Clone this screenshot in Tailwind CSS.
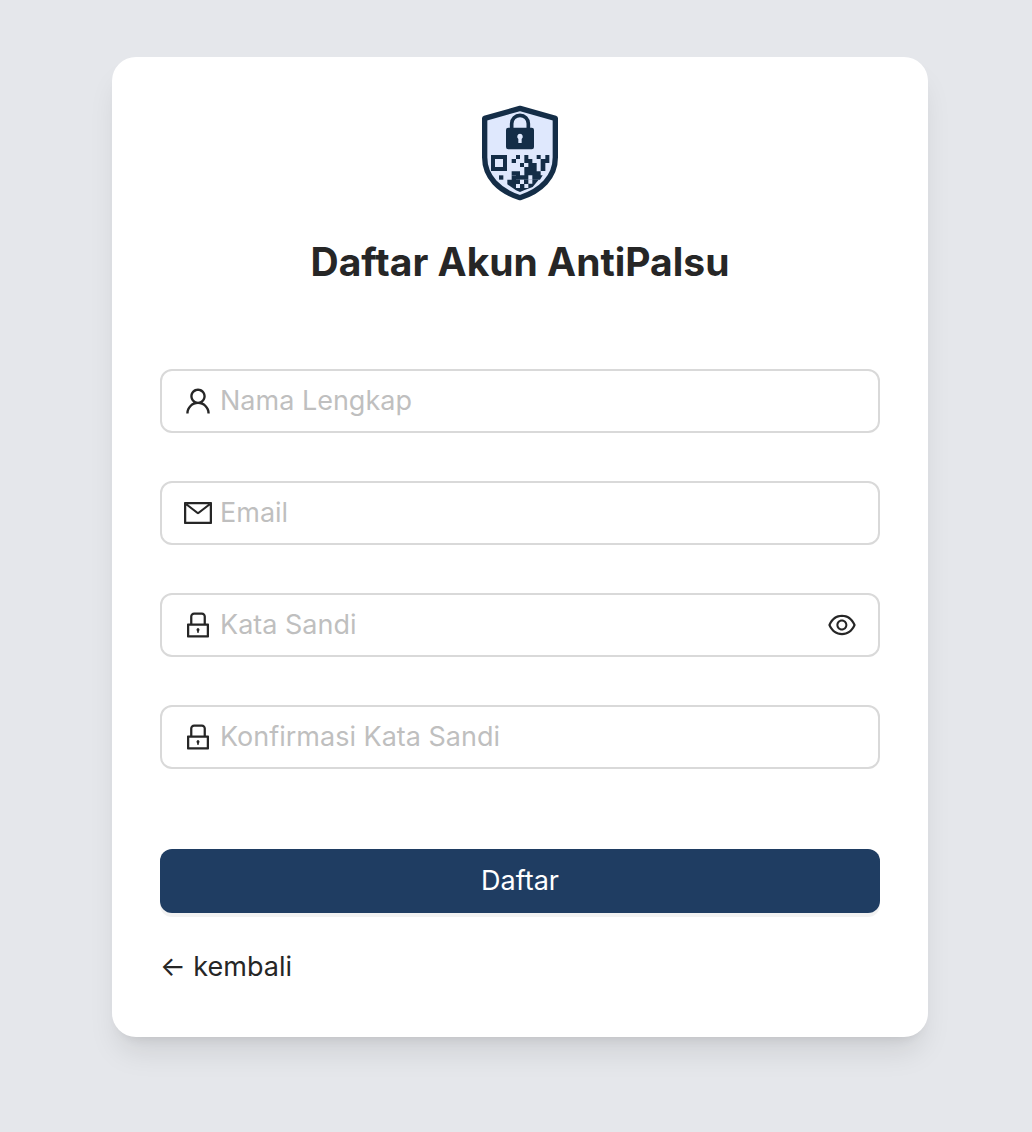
<!DOCTYPE html>
<html lang="id">
<head>
    <meta charset="UTF-8">
    <meta name="viewport" content="width=device-width, initial-scale=1.0">
    <title>Daftar Akun AntiPalsu</title>
    <script src="https://cdn.jsdelivr.net/npm/@tailwindcss/browser@4"></script>
</head>
<body class="min-h-screen bg-[#e5e7eb] pt-[57px] pb-24 pl-28 pr-26 font-['Inter',sans-serif] text-[#262626]">
    <main class="w-full max-w-[816px] mx-auto bg-white rounded-3xl p-12 shadow-[0_20px_30px_-6px_rgba(0,0,0,0.1),0_8px_12px_-8px_rgba(0,0,0,0.1)]">
        <!-- logo -->
        <svg class="block mx-auto w-20 h-24" viewBox="30 30 240 288" role="img" aria-label="AntiPalsu">
            <path d="M150 40 L256 70 V187 C256 246 213 288 150 308 C87 288 44 246 44 187 V70 Z" fill="#dfe8fd" stroke="#142d47" stroke-width="16" stroke-linejoin="round"/>
            <path d="M125 100 V86 a25 25 0 0 1 50 0 V100" fill="none" stroke="#142d47" stroke-width="11"/>
            <rect x="108" y="98" width="84" height="65" rx="7" fill="#142d47"/>
            <path d="M150 116 a9 9 0 0 1 5 16 v12 h-10 v-12 a9 9 0 0 1 5 -16z" fill="#dfe8fd"/>
            <rect x="69" y="186" width="36" height="36" fill="none" stroke="#142d47" stroke-width="12"/>
            <g fill="#142d47">
                <path d="M87 241h13v13h-13z"/>
                <path d="M138 180h12v12h-12zM163 180h12v12h-12zM200 180h12v12h-12zM226 180h12v24h-12zM125 192h13v12h-13zM163 192h24v12h-24zM212 192h14v36h-14zM150 204h12v12h-12zM175 204h25v12h-25z"/>
                <path d="M163 216h37v13h-37zM125 229h25v12h-25zM163 229h49v12h-49zM138 241h37v13h-37zM187 241h31l-8 13h-23z"/>
                <!-- bottom block follows the curve of the shield -->
                <path d="M125 254h-13v14l26 18 12 5 12 -5 26 -10 18 -22z"/>
                <path d="M125 241h13v14h-13z"/>
            </g>
            <path d="M150 254h12v13h-12zM138 267h12v12h-12zM163 267h12v12h-12zM175 254h12v12h-12z" fill="#dfe8fd"/>
        </svg>

        <h1 class="mt-9 mb-[82px] text-center text-[39px] leading-[50px] font-bold">Daftar Akun AntiPalsu</h1>

        <form id="registerForm">
            <div class="flex flex-col gap-12">
                <label class="flex items-center gap-2 h-16 px-[22px] border-2 border-[#d9d9d9] rounded-xl">
                    <svg class="w-7 h-7 shrink-0" viewBox="64 64 896 896" fill="currentColor" aria-hidden="true"><path d="M858.5 763.6a374 374 0 00-80.6-119.5 375.63 375.63 0 00-119.5-80.6c-.4-.2-.8-.3-1.2-.5C719.5 518 760 444.7 760 362c0-137-111-248-248-248S264 225 264 362c0 82.7 40.5 156 102.8 201.1-.4.2-.8.3-1.2.5-44.8 18.9-85 46-119.5 80.6a375.63 375.63 0 00-80.6 119.5A371.7 371.7 0 00136 901.8a8 8 0 008 8.2h60c4.4 0 7.9-3.5 8-7.8 2-77.2 33-149.5 87.8-204.3 56.7-56.7 132-87.9 212.2-87.9s155.5 31.2 212.2 87.9C779 752.7 810 825 812 902.2c.1 4.4 3.6 7.8 8 7.8h60a8 8 0 008-8.2c-1-47.8-10.9-94.3-29.5-138.2zM512 534c-45.9 0-89.1-17.9-121.6-50.4S340 407.9 340 362c0-45.9 17.9-89.1 50.4-121.6S466.1 190 512 190s89.1 17.9 121.6 50.4S684 316.1 684 362c0 45.9-17.9 89.1-50.4 121.6S557.9 534 512 534z"/></svg>
                    <input type="text" name="name" aria-label="Nama Lengkap" placeholder="Nama Lengkap" required class="w-full min-w-0 text-[27px] leading-11 outline-none placeholder:text-[#bfbfbf]">
                </label>
                <label class="flex items-center gap-2 h-16 px-[22px] border-2 border-[#d9d9d9] rounded-xl">
                    <svg class="w-7 h-7 shrink-0" viewBox="64 64 896 896" fill="currentColor" aria-hidden="true"><path d="M928 160H96c-17.7 0-32 14.3-32 32v640c0 17.7 14.3 32 32 32h832c17.7 0 32-14.3 32-32V192c0-17.7-14.3-32-32-32zm-40 110.8V792H136V270.8l-27.6-21.5 39.3-50.5 42.8 33.3h643.1l42.8-33.3 39.3 50.5-27.7 21.5zM833.6 232L512 482 190.4 232l-42.8-33.3-39.3 50.5 27.6 21.5 341.6 265.6a55.99 55.99 0 0068.7 0L888 270.8l27.6-21.5-39.3-50.5-42.7 33.2z"/></svg>
                    <input type="email" name="email" aria-label="Email" placeholder="Email" required class="w-full min-w-0 text-[27px] leading-11 outline-none placeholder:text-[#bfbfbf]">
                </label>
                <div class="flex items-center gap-2 h-16 px-[22px] border-2 border-[#d9d9d9] rounded-xl">
                    <svg class="w-7 h-7 shrink-0" viewBox="64 64 896 896" fill="currentColor" aria-hidden="true"><path d="M832 464h-68V240c0-70.7-57.3-128-128-128H388c-70.7 0-128 57.3-128 128v224h-68c-17.7 0-32 14.3-32 32v384c0 17.7 14.3 32 32 32h640c17.7 0 32-14.3 32-32V496c0-17.7-14.3-32-32-32zM332 240c0-30.9 25.1-56 56-56h248c30.9 0 56 25.1 56 56v224H332V240zm460 600H232V536h560v304zM484 701v53c0 4.4 3.6 8 8 8h40c4.4 0 8-3.6 8-8v-53a48.01 48.01 0 10-56 0z"/></svg>
                    <input type="password" id="password" name="password" aria-label="Kata Sandi" placeholder="Kata Sandi" required class="w-full min-w-0 text-[27px] leading-11 outline-none placeholder:text-[#bfbfbf]">
                    <button type="button" id="togglePassword" aria-label="Tampilkan kata sandi" class="shrink-0 cursor-pointer">
                        <svg class="block w-7 h-7" viewBox="64 64 896 896" fill="currentColor" aria-hidden="true"><path d="M942.2 486.2C847.4 286.5 704.1 186 512 186c-192.2 0-335.4 100.5-430.2 300.3a60.3 60.3 0 000 51.5C176.6 737.5 319.9 838 512 838c192.2 0 335.4-100.5 430.2-300.3 7.7-16.2 7.7-35 0-51.5zM512 766c-161.3 0-279.4-81.8-362.7-254C232.6 339.8 350.7 258 512 258c161.3 0 279.4 81.8 362.7 254C791.5 684.2 673.4 766 512 766zm-4-430c-97.2 0-176 78.8-176 176s78.8 176 176 176 176-78.8 176-176-78.8-176-176-176zm0 288c-61.9 0-112-50.1-112-112s50.1-112 112-112 112 50.1 112 112-50.1 112-112 112z"/></svg>
                    </button>
                </div>
                <label class="flex items-center gap-2 h-16 px-[22px] border-2 border-[#d9d9d9] rounded-xl">
                    <svg class="w-7 h-7 shrink-0" viewBox="64 64 896 896" fill="currentColor" aria-hidden="true"><path d="M832 464h-68V240c0-70.7-57.3-128-128-128H388c-70.7 0-128 57.3-128 128v224h-68c-17.7 0-32 14.3-32 32v384c0 17.7 14.3 32 32 32h640c17.7 0 32-14.3 32-32V496c0-17.7-14.3-32-32-32zM332 240c0-30.9 25.1-56 56-56h248c30.9 0 56 25.1 56 56v224H332V240zm460 600H232V536h560v304zM484 701v53c0 4.4 3.6 8 8 8h40c4.4 0 8-3.6 8-8v-53a48.01 48.01 0 10-56 0z"/></svg>
                    <input type="password" name="confirm" aria-label="Konfirmasi Kata Sandi" placeholder="Konfirmasi Kata Sandi" required class="w-full min-w-0 text-[27px] leading-11 outline-none placeholder:text-[#bfbfbf]">
                </label>
            </div>
            <button type="submit" class="mt-20 w-full h-16 rounded-xl bg-[#1f3d62] text-white text-[27px] leading-11 shadow-[0_4px_0_rgba(0,0,0,0.05)] cursor-pointer">Daftar</button>
        </form>

        <div class="mt-8 text-[27px] leading-11">
            <a href="login.html">← kembali</a>
        </div>
    </main>

    <script>
        document.getElementById('togglePassword').addEventListener('click', function() {
            const password = document.getElementById('password');
            password.type = password.type === 'password' ? 'text' : 'password';
        });
    </script>
</body>
</html>
